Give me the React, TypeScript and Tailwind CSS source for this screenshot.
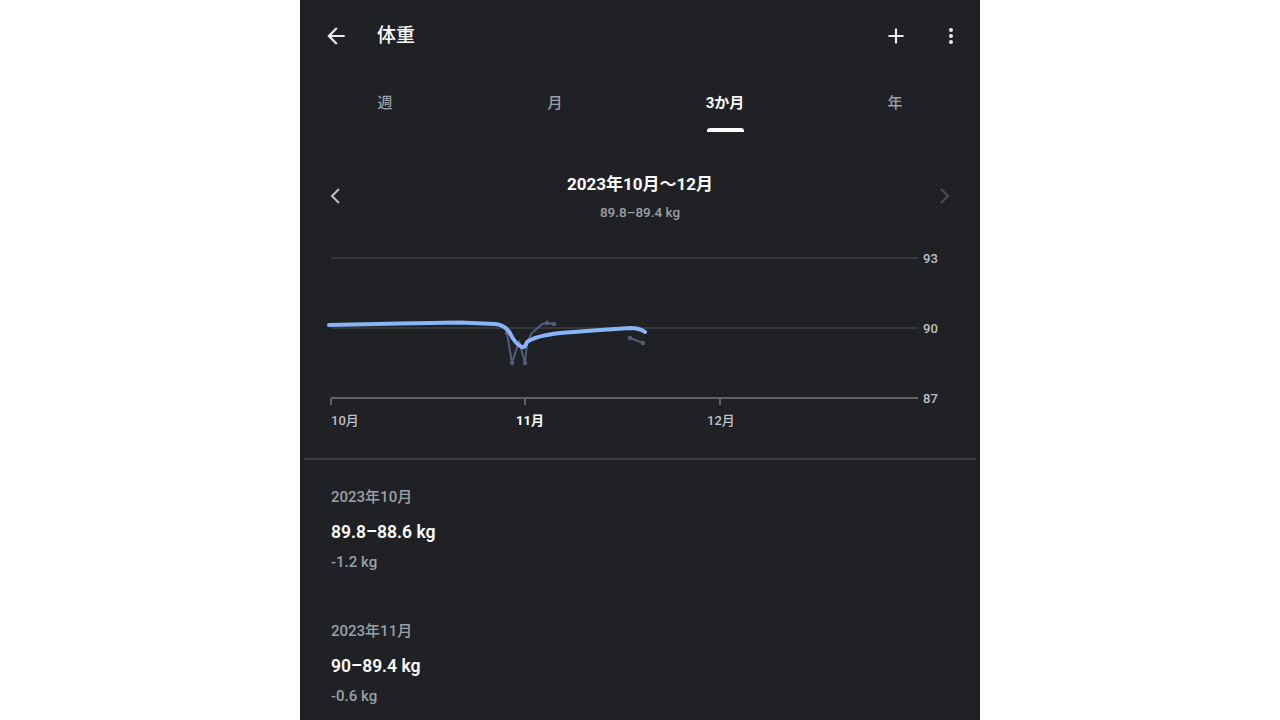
const font = { fontFamily: 'Roboto, "Noto Sans CJK JP", sans-serif' }

function BackIcon() {
  return (
    <svg width="26" height="26" viewBox="0 0 24 24" fill="#e8eaed">
      <path d="M20 11H7.83l5.59-5.59L12 4l-8 8 8 8 1.41-1.41L7.83 13H20v-2z" />
    </svg>
  )
}

function PlusIcon() {
  return (
    <svg width="26" height="26" viewBox="0 0 24 24" fill="#e8eaed">
      <path d="M19 13h-6v6h-2v-6H5v-2h6V5h2v6h6v2z" />
    </svg>
  )
}

function MoreIcon() {
  return (
    <svg width="24" height="24" viewBox="0 0 24 24" fill="#e8eaed">
      <path d="M12 8c1.1 0 2-.9 2-2s-.9-2-2-2-2 .9-2 2 .9 2 2 2zm0 2c-1.1 0-2 .9-2 2s.9 2 2 2 2-.9 2-2-.9-2-2-2zm0 6c-1.1 0-2 .9-2 2s.9 2 2 2 2-.9 2-2-.9-2-2-2z" />
    </svg>
  )
}

function Chevron({ dir, color }: { dir: 'left' | 'right'; color: string }) {
  return (
    <svg width="24" height="24" viewBox="0 0 24 24" fill="none" stroke={color} strokeWidth="2">
      {dir === 'left' ? <path d="M15 5l-7 7 7 7" /> : <path d="M9 5l7 7-7 7" />}
    </svg>
  )
}

function Chart() {
  const grid = '#3c4043'
  const label = '#bdc1c6'
  return (
    <svg width="680" height="200" viewBox="0 0 680 200" className="block">
      <line x1="31" y1="17" x2="618" y2="17" stroke={grid} strokeWidth="1.5" />
      <line x1="31" y1="87" x2="618" y2="87" stroke={grid} strokeWidth="1.5" />
      <line x1="31" y1="157" x2="618" y2="157" stroke="#5f6368" strokeWidth="2" />
      {[31, 225, 420].map((x) => (
        <line key={x} x1={x} y1="157" x2={x} y2="164" stroke="#5f6368" strokeWidth="2" />
      ))}
      <g fontSize="13" fill={label} fontWeight="500" style={font}>
        <text x="623" y="22">93</text>
        <text x="623" y="92">90</text>
        <text x="623" y="162">87</text>
        <text x="31" y="184">10月</text>
        <text x="216" y="184" fill="#ffffff" fontWeight="700">11月</text>
        <text x="407" y="184">12月</text>
      </g>
      <g stroke="#4f5f7d" strokeWidth="2" fill="none" strokeLinejoin="round">
        <polyline points="207,92 212,122 219,100 225,122 227,103 231,93 242,83 247,82 254,83" />
        <polyline points="330,97 343,102" />
      </g>
      <g fill="#4f5f7d">
        {[
          [207, 92],
          [212, 122],
          [225, 122],
          [247, 82],
          [254, 83],
          [330, 97],
          [343, 102],
        ].map(([x, y], i) => (
          <circle key={i} cx={x} cy={y} r="2.2" />
        ))}
      </g>
      <path
        d="M29 84 L100 82.5 L160 81.5 L195 83 Q205 84 210 92 Q215 103 222 106 Q225 107 227 101 Q235 95 260 92 L300 89 L330 87 Q340 87 345 91"
        stroke="#8ab4f8"
        strokeWidth="4"
        fill="none"
        strokeLinecap="round"
        strokeLinejoin="round"
      />
    </svg>
  )
}

function MonthSummary({ month, range, delta }: { month: string; range: string; delta: string }) {
  return (
    <div>
      <div className="text-[15px] leading-[20px] text-[#9aa0a6] font-medium">{month}</div>
      <div className="mt-[13px] text-[17.5px] leading-[24px] text-white font-semibold">{range}</div>
      <div className="mt-[8px] text-[15px] leading-[20px] text-[#9aa0a6] font-medium">{delta}</div>
    </div>
  )
}

export default function App() {
  const tabs = ['週', '月', '3か月', '年']
  return (
    <div className="w-full h-[720px] bg-white flex justify-center overflow-hidden" style={font}>
      <div className="w-[680px] h-[720px] bg-[#202124] flex flex-col">
        <div className="h-[72px] flex items-center pl-[23px] pr-[17px]">
          <BackIcon />
          <div className="ml-[28px] text-[19px] font-medium text-white">体重</div>
          <div className="ml-auto flex items-center gap-[30px]">
            <PlusIcon />
            <MoreIcon />
          </div>
        </div>

        <div className="h-[64px] grid grid-cols-4">
          {tabs.map((t) => {
            const active = t === '3か月'
            return (
              <div key={t} className="flex flex-col items-center pt-[21px]">
                <div
                  className={
                    active
                      ? 'text-[15px] leading-[20px] text-white font-bold'
                      : 'text-[15px] leading-[20px] text-[#9aa0a6] font-medium'
                  }
                >
                  {t}
                </div>
                {active && <div className="mt-[15px] w-[37px] h-[4px] rounded-t-[3px] bg-white" />}
              </div>
            )
          })}
        </div>

        <div className="pt-[37px] flex items-start px-[24px]">
          <div className="mt-[11px]">
            <Chevron dir="left" color="#bdc1c6" />
          </div>
          <div className="flex-1 flex flex-col items-center">
            <div className="text-[17px] leading-[22px] text-white font-bold">2023年10月〜12月</div>
            <div className="mt-[8px] text-[13.5px] leading-[18px] text-[#9aa0a6] font-medium">
              89.8–89.4 kg
            </div>
          </div>
          <div className="mt-[11px]">
            <Chevron dir="right" color="#4b4e52" />
          </div>
        </div>

        <div className="mt-[20px]">
          <Chart />
        </div>

        <div className="mt-[17px] mx-[4px] h-[2px] bg-[#3c3d40]" />

        <div className="pl-[31px] pt-[27px] flex flex-col gap-[49px]">
          <MonthSummary month="2023年10月" range="89.8–88.6 kg" delta="-1.2 kg" />
          <MonthSummary month="2023年11月" range="90–89.4 kg" delta="-0.6 kg" />
        </div>
      </div>
    </div>
  )
}
